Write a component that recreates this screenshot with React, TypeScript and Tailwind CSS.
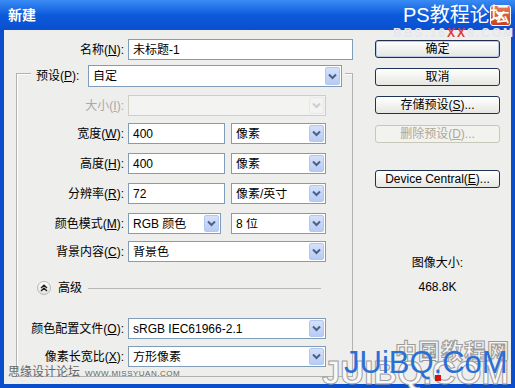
import React from "react";

function Chevron({ disabled }: { disabled?: boolean }) {
  return (
    <svg width="9" height="7" viewBox="0 0 9 7">
      <path
        d="M1 1.5 L4.5 5 L8 1.5"
        fill="none"
        stroke={disabled ? "#C9CDD6" : "#4D6185"}
        strokeWidth="2"
      />
    </svg>
  );
}

function Select({
  cls,
  value,
  disabled,
}: {
  cls: string;
  value?: string;
  disabled?: boolean;
}) {
  return (
    <div
      className={`flex items-center border ${
        disabled ? "border-[#CFCDC4] bg-[#F3F3F1]" : "border-[#7F9DB9] bg-white"
      } ${cls}`}
    >
      <span className="flex-1 truncate pl-[4px] text-[12px] leading-none">{value}</span>
      <div
        className={`mr-[1px] flex h-[calc(100%-2px)] w-[15px] items-center justify-center rounded-[2px] border ${
          disabled
            ? "border-[#E8E8E6] bg-[#F3F3F1]"
            : "border-[#B3C7EF] bg-linear-to-b from-[#D4E1FB] to-[#B7CBF4]"
        }`}
      >
        <Chevron disabled={disabled} />
      </div>
    </div>
  );
}

function Input({ cls, value }: { cls: string; value: string }) {
  return (
    <div className={`flex items-center border border-[#7F9DB9] bg-white pl-[4px] text-[12px] ${cls}`}>
      {value}
    </div>
  );
}

function Label({ children, disabled }: { children: React.ReactNode; disabled?: boolean }) {
  return (
    <div
      className={`w-[111px] shrink-0 pr-[4px] text-right text-[12px] ${
        disabled ? "text-[#A9A9A9]" : "text-black"
      }`}
    >
      {children}
    </div>
  );
}

function Btn({
  children,
  cls,
  disabled,
  primary,
}: {
  children: React.ReactNode;
  cls: string;
  disabled?: boolean;
  primary?: boolean;
}) {
  return (
    <div
      className={`flex h-[18px] w-[125px] items-center justify-center rounded-[3px] border text-[12px] ${
        disabled
          ? "border-[#C9C7BA] bg-[#F2F2EF] text-[#ACA899]"
          : primary
          ? "border-[#1F2F4F] bg-linear-to-b from-white to-[#E4E4E0] text-black shadow-[inset_0_0_0_1px_#B8C8E8]"
          : "border-[#1F3355] bg-linear-to-b from-white to-[#E6E6E2] text-black"
      } ${cls}`}
    >
      {children}
    </div>
  );
}

export default function App() {
  return (
    <div className="relative h-[388px] w-[515px] overflow-hidden bg-[#0B4ECB] font-['Liberation_Sans','Noto_Sans_CJK_SC',sans-serif] text-black">
      {/* Title bar */}
      <div className="flex h-[30px] items-center bg-linear-to-b from-[#3A8BF4] via-[#0C5ADB] to-[#0A4FCF] pl-[8px]">
        <span className="text-[14px] font-bold text-white">新建</span>
        <div className="ml-auto mr-[4px] flex h-[21px] w-[21px] items-center justify-center rounded-[3px] border border-white bg-linear-to-b from-[#E77A56] to-[#C8421C] text-[15px] font-bold leading-none text-white">
          ✕
        </div>
      </div>

      {/* Body */}
      <div className="mx-[4px] flex h-[354px] bg-[#EEEEEC]">
        {/* Left column */}
        <div className="w-[351px] shrink-0">
          <div className="mt-[9px] flex h-[21px] items-center">
            <div className="w-[124px] pr-[4px] text-right text-[12px]">
              名称(<u>N</u>):
            </div>
            <Input cls="h-[21px] w-[225px]" value="未标题-1" />
          </div>

          {/* Group box */}
          <div className="ml-[12px] mt-[13px] h-[304px] w-[337px] border border-[#B2B2B2] shadow-[inset_1px_1px_0_#FFFFFF]">
            <div className="ml-[14px] mr-[7px] mt-[-9px] flex items-center bg-[#EEEEEC] pl-[5px] pr-[3px]">
              <div className="w-[52px] shrink-0 text-[12px]">
                预设(<u>P</u>):
              </div>
              <Select cls="h-[22px] flex-1" value="自定" />
            </div>

            <div className="mt-[8px] flex items-center">
              <Label disabled>
                大小(<u>I</u>):
              </Label>
              <Select cls="h-[21px] w-[198px]" disabled />
            </div>

            <div className="mt-[7px] flex items-center">
              <Label>
                宽度(<u>W</u>):
              </Label>
              <Input cls="h-[21px] w-[97px]" value="400" />
              <Select cls="ml-[6px] h-[21px] w-[95px]" value="像素" />
            </div>

            <div className="mt-[9px] flex items-center">
              <Label>
                高度(<u>H</u>):
              </Label>
              <Input cls="h-[21px] w-[97px]" value="400" />
              <Select cls="ml-[6px] h-[21px] w-[95px]" value="像素" />
            </div>

            <div className="mt-[9px] flex items-center">
              <Label>
                分辨率(<u>R</u>):
              </Label>
              <Input cls="h-[21px] w-[97px]" value="72" />
              <Select cls="ml-[6px] h-[21px] w-[95px]" value="像素/英寸" />
            </div>

            <div className="mt-[9px] flex items-center">
              <Label>
                颜色模式(<u>M</u>):
              </Label>
              <Select cls="h-[21px] w-[93px]" value="RGB 颜色" />
              <Select cls="ml-[10px] h-[21px] w-[95px]" value="8 位" />
            </div>

            <div className="mt-[7px] flex items-center">
              <Label>
                背景内容(<u>C</u>):
              </Label>
              <Select cls="h-[21px] w-[198px]" value="背景色" />
            </div>

            <div className="mt-[19px] flex h-[14px] items-center">
              <div className="ml-[20px] flex h-[14px] w-[14px] items-center justify-center rounded-full border border-[#B8B8B8] bg-linear-to-b from-white to-[#E2E2DE]">
                <svg width="8" height="8" viewBox="0 0 8 8">
                  <path d="M1 4 L4 1.2 L7 4 M1 7 L4 4.2 L7 7" fill="none" stroke="#222" strokeWidth="1.4" />
                </svg>
              </div>
              <span className="ml-[7px] text-[12px]">高级</span>
              <div className="ml-[6px] mr-[31px] h-px flex-1 bg-[#B8B8B8]" />
            </div>

            <div className="mt-[23px] flex items-center">
              <Label>
                颜色配置文件(<u>O</u>):
              </Label>
              <Select cls="h-[21px] w-[198px]" value="sRGB IEC61966-2.1" />
            </div>

            <div className="mt-[7px] flex items-center">
              <Label>
                像素长宽比(<u>X</u>):
              </Label>
              <Select cls="h-[21px] w-[198px]" value="方形像素" />
            </div>
          </div>
        </div>

        {/* Right column */}
        <div className="ml-[20px] flex w-[125px] flex-col">
          <Btn cls="mt-[10px]" primary>
            确定
          </Btn>
          <Btn cls="mt-[10px]">取消</Btn>
          <Btn cls="mt-[10px]">
            存储预设(<u>S</u>)...
          </Btn>
          <Btn cls="mt-[11px]" disabled>
            删除预设(<u>D</u>)...
          </Btn>
          <Btn cls="mt-[27px]">
            Device Central(<u>E</u>)...
          </Btn>
          <div className="mt-[68px] text-center text-[12px] leading-[14px]">图像大小:</div>
          <div className="mt-[10px] text-center text-[12px] leading-[14px]">468.8K</div>
        </div>
      </div>

      {/* Watermarks */}
      <div className="absolute left-[403px] top-[3px] text-[20px] leading-[24px] text-white">PS教程论坛</div>
      <div className="absolute left-[393px] top-[27px] text-[12px] font-bold leading-[12px] tracking-[2px] text-[#E4E7EE]">
        BBS.16<span className="text-[#E23A3A]">XX</span>8.COM
      </div>
      <div className="absolute left-[8px] top-[365px] flex items-end gap-[5px] text-[#666]">
        <span className="text-[12px] leading-[15px]">思缘设计论坛</span>
        <span className="text-[8px] leading-[12px] tracking-[0.5px]">WWW.MISSYUAN.COM</span>
      </div>
      <div className="absolute left-[395px] top-[340px] text-[22px] font-bold leading-[24px] tracking-[1px] text-[#F6F6F6] [-webkit-text-stroke:1px_#9A9A9A]">
        中国教程网
      </div>
      <div className="absolute left-[322px] top-[356px] text-[33px] font-bold leading-[34px] text-[#F8F8F8] [-webkit-text-stroke:1px_#A0A0A0]">
        JUIBQ.COM
      </div>
      <div className="absolute left-[344px] top-[346px] text-[31px] leading-[34px] text-[#2A6FD6]">JUiBQ.CoM</div>
      <div className="absolute left-[435px] top-[375px] h-[6px] w-[6px] bg-[#D01414]" />
    </div>
  );
}
